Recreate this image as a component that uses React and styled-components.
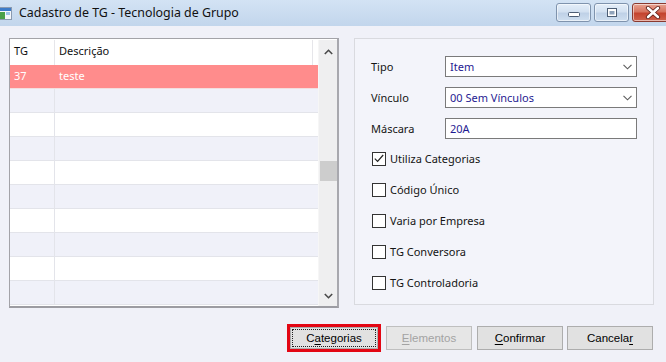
import React from "react";
import styled, { createGlobalStyle } from "styled-components";

const Global = createGlobalStyle`
  html, body { margin: 0; padding: 0; background: #f0f1f8; }
  body { width: 666px; height: 362px; overflow: hidden; }
  * { box-sizing: border-box; }
`;

const Window = styled.div`
  width: 666px;
  height: 362px;
  display: flex;
  flex-direction: column;
  background: #f0f1f8;
  font-family: "Noto Sans", "Liberation Sans", sans-serif;
  font-size: 11px;
  color: #1a1a1a;
`;

const TitleBar = styled.div`
  height: 26px;
  flex: none;
  display: flex;
  align-items: flex-start;
  background: linear-gradient(#d3e3f4, #c2d6ec);
`;

const AppIcon = styled.svg`
  margin-top: 7px;
  margin-left: -2px;
  flex: none;
`;

const Title = styled.div`
  margin-left: 7px;
  margin-top: 4px;
  font-family: "Noto Sans", sans-serif;
  font-size: 12.4px;
  color: #111;
  flex: 1;
`;

const Controls = styled.div`
  display: flex;
  gap: 3px;
  margin-top: 3px;
  margin-right: -14px;
`;

const CtrlBtn = styled.div`
  width: ${(p) => (p.$close ? 48 : 35)}px;
  height: 19px;
  border: 1px solid ${(p) => (p.$close ? "#8a3a30" : "#7f93ad")};
  border-radius: 3px;
  display: flex;
  align-items: center;
  justify-content: ${(p) => (p.$close ? "flex-start" : "center")};
  padding-left: ${(p) => (p.$close ? 12 : 0)}px;
  background: ${(p) =>
    p.$close
      ? "linear-gradient(#e8a392 0%, #d6735f 45%, #c4432e 55%, #d0624c 100%)"
      : "linear-gradient(#e4eef9 0%, #d3e1f1 45%, #bfd1e7 55%, #cfdff0 100%)"};
  box-shadow: inset 0 0 0 1px rgba(255, 255, 255, 0.55);
`;

const Body = styled.div`
  flex: 1;
  display: flex;
  flex-direction: column;
`;

const Main = styled.div`
  display: flex;
  align-items: flex-start;
  gap: 15px;
  padding: 12px 0 0 9px;
`;

const Grid = styled.div`
  width: 330px;
  height: 270px;
  border: 1px solid #a3a3a8;
  border-bottom: 2px solid #9c9ca2;
  border-right: 2px solid #a8a8ae;
  background: #fff;
  display: flex;
  padding: 1px 0 0 0;
`;

const Table = styled.div`
  flex: 1;
  display: flex;
  flex-direction: column;
`;

const HeaderRow = styled.div`
  height: 25px;
  display: grid;
  grid-template-columns: 45px 258px 1fr;
  background: #fff;
`;

const HeaderCell = styled.div`
  padding-left: 4px;
  padding-top: 3px;
  border-right: 1px solid ${(p) => (p.$last ? "transparent" : "#e6e6ea")};
  color: #111;
  font-size: 11px;
`;

const Row = styled.div`
  height: 24px;
  display: grid;
  grid-template-columns: 45px 1fr;
  background: ${(p) => (p.$selected ? "#ff8c8c" : p.$alt ? "#f0f1f9" : "#ffffff")};
  border-bottom: 1px solid ${(p) => (p.$selected ? "#f3dede" : "#e3e4ea")};
  color: ${(p) => (p.$selected ? "#ffffff" : "#111")};
`;

const Cell = styled.div`
  padding-left: 4px;
  padding-top: 3px;
  border-right: 1px solid ${(p) => (p.$first ? (p.$sel ? "transparent" : "#e3e4ea") : "transparent")};
`;

const ScrollBar = styled.div`
  width: 19px;
  flex: none;
  background: #efeff0;
  display: flex;
  flex-direction: column;
  align-items: center;
  border-left: 1px solid #f6f6f6;
`;

const Arrow = styled.svg`
  margin-top: ${(p) => p.$top || 0}px;
  margin-bottom: ${(p) => p.$bottom || 0}px;
  flex: none;
`;

const Thumb = styled.div`
  width: 17px;
  height: 20px;
  background: #cdcdcd;
  margin-top: 106px;
  margin-bottom: auto;
`;

const Panel = styled.div`
  width: 300px;
  height: 267px;
  border: 1px solid #d9dadf;
  background: #f3f4fa;
  padding: 17px 0 0 16px;
  display: flex;
  flex-direction: column;
`;

const FormGrid = styled.div`
  display: grid;
  grid-template-columns: 74px 192px;
  row-gap: 10px;
  align-items: center;
`;

const Label = styled.div`
  color: #141414;
  font-size: 11px;
`;

const Field = styled.div`
  height: 21px;
  border: 1px solid #7a7a7a;
  background: #fff;
  display: flex;
  align-items: center;
  justify-content: space-between;
  padding: 0 4px 0 4px;
  color: #1f1b92;
  font-size: 11px;
`;

const Checks = styled.div`
  display: flex;
  flex-direction: column;
  gap: 18px;
  margin-top: 13px;
`;

const CheckRow = styled.div`
  display: flex;
  align-items: center;
  gap: 4px;
  height: 13px;
  color: #141414;
  margin-left: 1px;
`;

const Box = styled.div`
  width: 14px;
  height: 14px;
  border: 1px solid #333;
  background: #fff;
  display: flex;
  align-items: center;
  justify-content: center;
  flex: none;
`;

const Footer = styled.div`
  display: flex;
  justify-content: flex-end;
  align-items: center;
  gap: 5px;
  padding: 16px 13px 0 0;
`;

const Focus = styled.div`
  border: 3px solid #e30613;
  width: 94px;
  height: 28px;
  display: flex;
`;

const Button = styled.div`
  width: 86px;
  height: 24px;
  margin-left: ${(p) => (p.$tight ? -1 : 0)}px;
  border: 1px solid ${(p) => (p.$disabled ? "#bfbfbf" : "#adadad")};
  background: ${(p) => (p.$disabled ? "#e6e6e6" : "#e1e1e1")};
  color: ${(p) => (p.$disabled ? "#a3a3a3" : "#000")};
  font-family: "Liberation Sans", Arial, sans-serif;
  font-size: 11.5px;
  display: flex;
  align-items: center;
  justify-content: center;
  position: relative;
  & u { text-decoration-thickness: 1px; text-underline-offset: 2px; }
`;

const FocusButton = styled(Button)`
  flex: 1;
  height: 22px;
`;

const FocusRect = styled.div`
  position: absolute;
  inset: 1px;
  border: 1px dotted #202020;
`;

const Chevron = () => (
  <svg width="9" height="6" viewBox="0 0 9 6">
    <path d="M0.5 0.8 L4.5 4.8 L8.5 0.8" fill="none" stroke="#5a5a5a" strokeWidth="1.1" />
  </svg>
);

const Check = ({ checked, children }) => (
  <CheckRow>
    <Box>
      {checked && (
        <svg width="10" height="9" viewBox="0 0 10 9">
          <path d="M0.8 4.6 L3.6 7.4 L9.2 1" fill="none" stroke="#222" strokeWidth="1.2" />
        </svg>
      )}
    </Box>
    <span>{children}</span>
  </CheckRow>
);

const rows = Array.from({ length: 9 }, (_, i) => i);

export default function App() {
  return (
    <Window>
      <Global />
      <TitleBar>
        <AppIcon width="14" height="13" viewBox="0 0 14 13">
          <rect x="0.5" y="0.5" width="13" height="12" fill="#f4f7fb" stroke="#8a9ab0" />
          <rect x="1" y="1" width="12" height="3" fill="#3d7cc9" />
          <rect x="1" y="5" width="6" height="7" fill="#4aa04a" />
          <rect x="8" y="5" width="4" height="3" fill="#9fc5e8" />
        </AppIcon>
        <Title>Cadastro de TG - Tecnologia de Grupo</Title>
        <Controls>
          <CtrlBtn>
            <svg width="14" height="12" viewBox="0 0 14 12">
              <rect x="1.5" y="5.5" width="11" height="4" rx="1" fill="#fff" stroke="#4c5d74" />
            </svg>
          </CtrlBtn>
          <CtrlBtn>
            <svg width="12" height="11" viewBox="0 0 12 11">
              <rect x="1.5" y="1.5" width="9" height="8" fill="#fff" stroke="#4c5d74" />
              <rect x="3.5" y="4" width="5" height="3.5" fill="#8fa3bb" />
            </svg>
          </CtrlBtn>
          <CtrlBtn $close>
            <svg width="16" height="13" viewBox="0 0 16 13">
              <path d="M3 2 L13 11 M13 2 L3 11" stroke="#5a1a12" strokeWidth="4.2" strokeLinecap="round" />
              <path d="M3 2 L13 11 M13 2 L3 11" stroke="#fff" strokeWidth="2.6" strokeLinecap="round" />
            </svg>
          </CtrlBtn>
        </Controls>
      </TitleBar>
      <Body>
        <Main>
          <Grid>
            <Table>
              <HeaderRow>
                <HeaderCell>TG</HeaderCell>
                <HeaderCell>Descrição</HeaderCell>
                <HeaderCell $last />
              </HeaderRow>
              <Row $selected>
                <Cell $first $sel>37</Cell>
                <Cell>teste</Cell>
              </Row>
              {rows.map((i) => (
                <Row key={i} $alt={i % 2 === 0}>
                  <Cell $first />
                  <Cell />
                </Row>
              ))}
            </Table>
            <ScrollBar>
              <Arrow $top={9} width="9" height="6" viewBox="0 0 9 6">
                <path d="M0.8 5 L4.5 1.3 L8.2 5" fill="none" stroke="#4a4a4a" strokeWidth="1.6" />
              </Arrow>
              <Thumb />
              <Arrow $bottom={7} width="9" height="6" viewBox="0 0 9 6">
                <path d="M0.8 1 L4.5 4.7 L8.2 1" fill="none" stroke="#4a4a4a" strokeWidth="1.6" />
              </Arrow>
            </ScrollBar>
          </Grid>
          <Panel>
            <FormGrid>
              <Label>Tipo</Label>
              <Field>
                <span>Item</span>
                <Chevron />
              </Field>
              <Label>Vínculo</Label>
              <Field>
                <span>00 Sem Vínculos</span>
                <Chevron />
              </Field>
              <Label>Máscara</Label>
              <Field>
                <span>20A</span>
              </Field>
            </FormGrid>
            <Checks>
              <Check checked>Utiliza Categorias</Check>
              <Check>Código Único</Check>
              <Check>Varia por Empresa</Check>
              <Check>TG Conversora</Check>
              <Check>TG Controladoria</Check>
            </Checks>
          </Panel>
        </Main>
        <Footer>
          <Focus>
            <FocusButton>
              <FocusRect />
              <span>
                C<u>a</u>tegorias
              </span>
            </FocusButton>
          </Focus>
          <Button $disabled>
            <span>
              <u>E</u>lementos
            </span>
          </Button>
          <Button>
            <span>
              <u>C</u>onfirmar
            </span>
          </Button>
          <Button $tight>
            <span>
              Cancela<u>r</u>
            </span>
          </Button>
        </Footer>
      </Body>
    </Window>
  );
}
